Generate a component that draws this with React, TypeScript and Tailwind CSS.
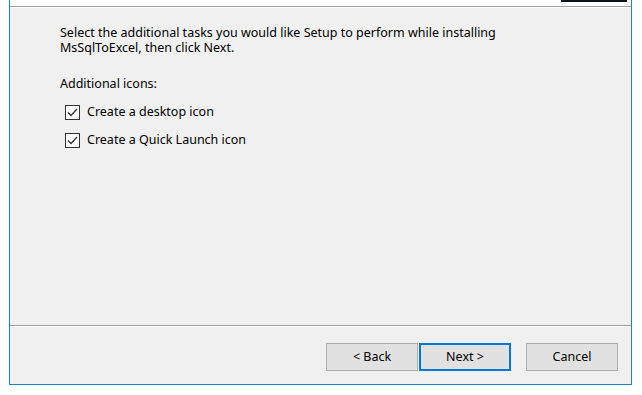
import React from 'react';

const font = { fontFamily: '"Noto Sans", "Segoe UI", sans-serif' };

function CheckItem({ label }: { label: string }) {
  return (
    <div className="flex h-[28px] items-center">
      <div className="ml-[5px] flex h-[15px] w-[15px] items-center justify-center border border-[#333333] bg-white">
        <svg width="11" height="9" viewBox="0 0 11 9">
          <path d="M1 4.5 L4 7.5 L10 1" fill="none" stroke="#333333" strokeWidth="1.3" />
        </svg>
      </div>
      <span className="ml-[7px] text-[12.5px] text-black">{label}</span>
    </div>
  );
}

function WizButton({ label, primary }: { label: string; primary?: boolean }) {
  return (
    <button
      className={
        'h-[28px] w-[92px] bg-[#e1e1e1] text-[12.5px] text-black ' +
        (primary ? 'border-2 border-[#0078d7]' : 'border border-[#adadad]')
      }
    >
      {label}
    </button>
  );
}

export default function App() {
  return (
    <div className="h-[395px] w-[642px] bg-white" style={font}>
      <div className="ml-[9px] flex h-[385px] w-[623px] flex-col border-x border-b border-[#1883d7] bg-[#f0f0f0]">
        {/* header strip */}
        <div className="flex h-[6px] justify-end bg-white pr-[4px]">
          <div className="h-[2px] w-[66px] bg-[#10131c]" />
        </div>
        <div className="h-px bg-[#a0a0a0]" />
        <div className="h-px bg-white" />

        {/* body */}
        <div className="flex-1 pl-[50px] pt-[17px]">
          <p className="w-[480px] text-[12.5px] leading-[15px] text-black">
            Select the additional tasks you would like Setup to perform while installing MsSqlToExcel, then click Next.
          </p>
          <p className="mt-[21px] text-[12.5px] leading-[15px] text-black">Additional icons:</p>
          <div className="mt-[7px]">
            <CheckItem label="Create a desktop icon" />
            <CheckItem label="Create a Quick Launch icon" />
          </div>
        </div>

        {/* footer */}
        <div className="h-px bg-[#a0a0a0]" />
        <div className="h-px bg-white" />
        <div className="flex h-[57px] items-start pt-[16px] pl-[316px]">
          <WizButton label="< Back" />
          <div className="ml-[1px]">
            <WizButton label="Next >" primary />
          </div>
          <div className="ml-[15px]">
            <WizButton label="Cancel" />
          </div>
        </div>
      </div>
    </div>
  );
}
